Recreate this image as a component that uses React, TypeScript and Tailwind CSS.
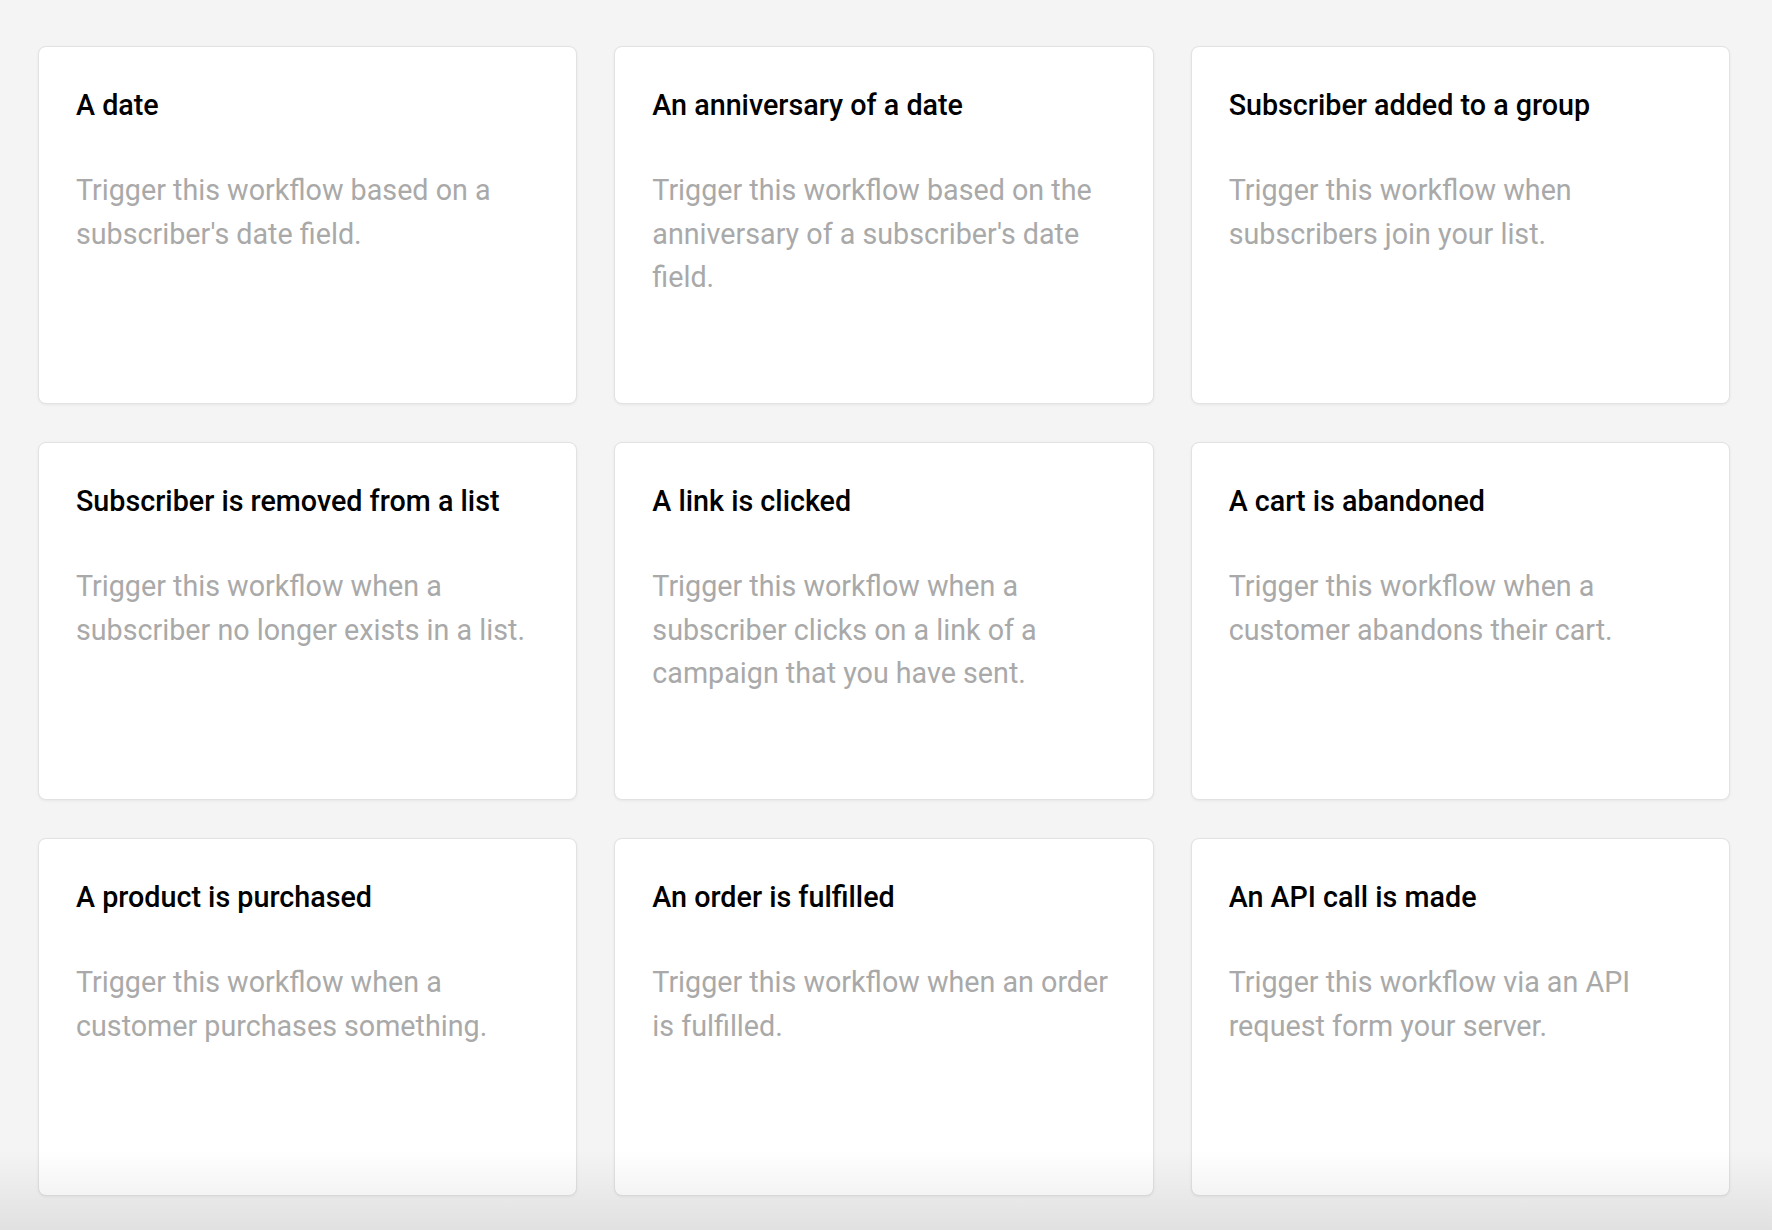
const triggers = [
  { title: "A date", text: "Trigger this workflow based on a subscriber's date field." },
  { title: "An anniversary of a date", text: "Trigger this workflow based on the anniversary of a subscriber's date field." },
  { title: "Subscriber added to a group", text: "Trigger this workflow when subscribers join your list." },
  { title: "Subscriber is removed from a list", text: "Trigger this workflow when a subscriber no longer exists in a list." },
  { title: "A link is clicked", text: "Trigger this workflow when a subscriber clicks on a link of a campaign that you have sent." },
  { title: "A cart is abandoned", text: "Trigger this workflow when a customer abandons their cart." },
  { title: "A product is purchased", text: "Trigger this workflow when a customer purchases something." },
  { title: "An order is fulfilled", text: "Trigger this workflow when an order is fulfilled." },
  { title: "An API call is made", text: "Trigger this workflow via an API request form your server." },
];

function TriggerCard({ title, text }: { title: string; text: string }) {
  return (
    <div className="h-[358px] rounded-[8px] border border-[#e2e2e2] bg-white pl-[37px] pr-[28px] pt-[41px] shadow-[0_1px_3px_rgba(0,0,0,0.06)]">
      <h3 className="m-0 text-[28.7px] font-medium leading-[34px] text-black">{title}</h3>
      <p className="m-0 mt-[47px] text-[28.7px] leading-[43.5px] text-[#a9a9a9]">{text}</p>
    </div>
  );
}

export default function App() {
  return (
    <div className="relative h-[1230px] overflow-hidden bg-[#f4f4f4] font-['Roboto',sans-serif]">
      <div className="grid grid-cols-3 gap-x-[37px] gap-y-[38px] pl-[38px] pr-[42px] pt-[46px]">
        {triggers.map((t) => (
          <TriggerCard key={t.title} title={t.title} text={t.text} />
        ))}
      </div>
      {/* bottom fade */}
      <div className="pointer-events-none absolute inset-x-0 bottom-0 h-[80px] bg-gradient-to-b from-transparent to-black/[0.08]" />
    </div>
  );
}
